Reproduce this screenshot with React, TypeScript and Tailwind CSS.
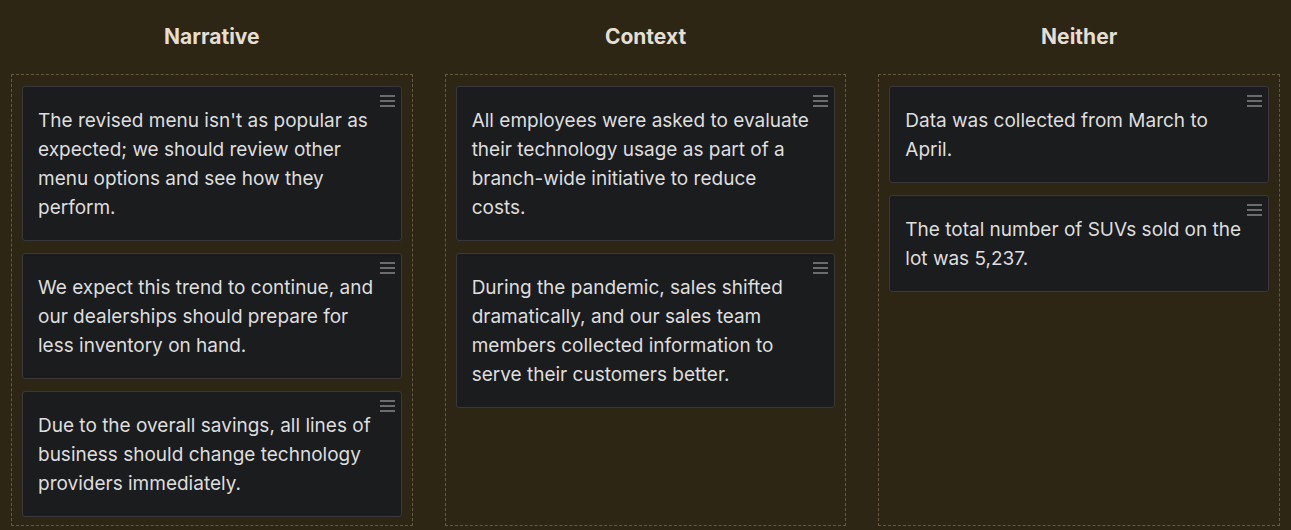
const columns = [
  {
    title: "Narrative",
    cards: [
      "The revised menu isn't as popular as expected; we should review other menu options and see how they perform.",
      "We expect this trend to continue, and our dealerships should prepare for less inventory on hand.",
      "Due to the overall savings, all lines of business should change technology providers immediately.",
    ],
  },
  {
    title: "Context",
    cards: [
      "All employees were asked to evaluate their technology usage as part of a branch-wide initiative to reduce costs.",
      "During the pandemic, sales shifted dramatically, and our sales team members collected information to serve their customers better.",
    ],
  },
  {
    title: "Neither",
    cards: [
      "Data was collected from March to April.",
      "The total number of SUVs sold on the lot was 5,237.",
    ],
  },
];

function Handle() {
  return (
    <span className="absolute top-[8px] right-[6px] flex flex-col gap-[3px]" aria-hidden="true">
      <span className="block h-[2px] w-[15px] bg-[#6c6c6c]" />
      <span className="block h-[2px] w-[15px] bg-[#6c6c6c]" />
      <span className="block h-[2px] w-[15px] bg-[#6c6c6c]" />
    </span>
  );
}

export default function App() {
  return (
    <div
      className="h-[530px] w-full overflow-hidden bg-[#2e2614] px-[11px] pt-[23px]"
      style={{ fontFamily: "Inter, 'Noto Sans', sans-serif" }}
    >
      <div className="grid grid-cols-3 gap-8">
        {columns.map((col) => (
          <div key={col.title} className="flex flex-col">
            <h2 className="mb-[23px] text-center text-[21px] font-bold leading-7 text-[#e4dfd3]">
              {col.title}
            </h2>
            <div className="flex h-[452px] flex-col gap-3 border border-dashed border-[#66593d] px-[10px] pt-[11px]">
              {col.cards.map((text) => (
                <div
                  key={text}
                  className="relative rounded-[3px] border border-[#38383a] bg-[#1b1c1e] pl-[15px] pr-[22px] pt-[19px] pb-[18px] text-[19px] leading-[29px] text-[#dedede]"
                >
                  <Handle />
                  {text}
                </div>
              ))}
            </div>
          </div>
        ))}
      </div>
    </div>
  );
}
